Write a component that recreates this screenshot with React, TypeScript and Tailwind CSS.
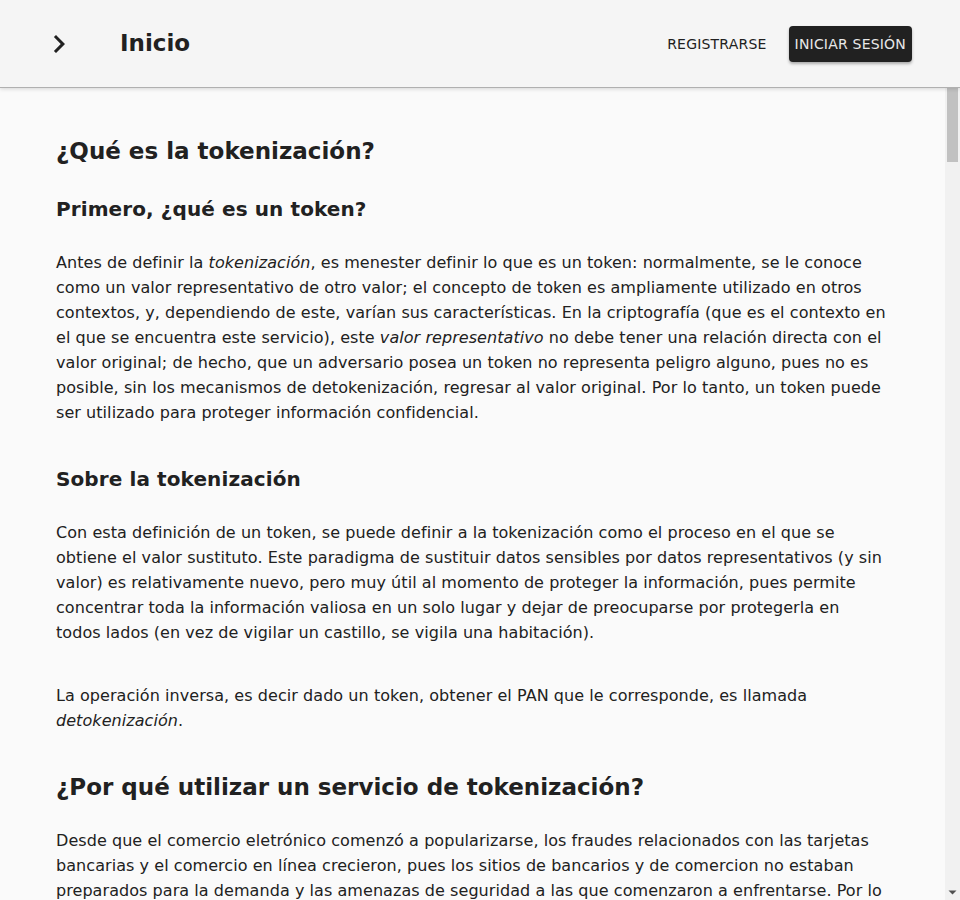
import React from "react";

const font = { fontFamily: '"DejaVu Sans", "Noto Sans", sans-serif' };

function Chevron() {
  return (
    <svg width="36" height="36" viewBox="0 0 24 24" className="block">
      <path d="M10 6 8.59 7.41 13.17 12l-4.58 4.59L10 18l6-6z" fill="#212121" />
    </svg>
  );
}

function Scrollbar() {
  return (
    <div className="flex h-full w-[15px] shrink-0 flex-col bg-[#f1f1f1]">
      <div className="h-[15px]" />
      <div className="mx-[2px] h-[147px] bg-[#c1c1c1]" />
      <div className="flex-1" />
      <div className="flex h-[15px] items-center justify-center">
        <svg width="9" height="9" viewBox="0 0 9 9" className="block">
          <path d="M0.5 2.5h8L4.5 6.5z" fill="#505050" />
        </svg>
      </div>
    </div>
  );
}

export default function App() {
  return (
    <div className="relative h-[900px] w-full overflow-hidden bg-[#fafafa] text-[#212121]" style={font}>
      <div className="flex h-full w-full">
        <main className="min-w-0 flex-1 overflow-hidden px-14 pt-[135px]">
          <h1 className="text-[23px] font-bold leading-[32px]">¿Qué es la tokenización?</h1>
          <h2 className="mt-[28px] text-[20px] font-bold leading-[28px] tracking-[0.1px]">Primero, ¿qué es un token?</h2>
          <p className="mt-[27px] text-[16px] leading-[25px] tracking-[0.06px]">
            Antes de definir la <em>tokenización</em>, es menester definir lo que es un token: normalmente, se le conoce
            como un valor representativo de otro valor; el concepto de token es ampliamente utilizado en otros
            contextos, y, dependiendo de este, varían sus características. En la criptografía (que es el contexto en
            el que se encuentra este servicio), este <em>valor representativo</em> no debe tener una relación directa con el
            valor original; de hecho, que un adversario posea un token no representa peligro alguno, pues no es
            posible, sin los mecanismos de detokenización, regresar al valor original. Por lo tanto, un token puede
            ser utilizado para proteger información confidencial.
          </p>
          <h2 className="mt-[40px] text-[20px] font-bold leading-[28px] tracking-[0.1px]">Sobre la tokenización</h2>
          <p className="mt-[27px] text-[16px] leading-[25px] tracking-[0.06px]">
            Con esta definición de un token, se puede definir a la tokenización como el proceso en el que se
            obtiene el valor sustituto. Este paradigma de sustituir datos sensibles por datos representativos (y sin
            valor) es relativamente nuevo, pero muy útil al momento de proteger la información, pues permite
            concentrar toda la información valiosa en un solo lugar y dejar de preocuparse por protegerla en
            todos lados (en vez de vigilar un castillo, se vigila una habitación).
          </p>
          <p className="mt-[38px] text-[16px] leading-[25px] tracking-[0.06px]">
            La operación inversa, es decir dado un token, obtener el PAN que le corresponde, es llamada{" "}
            <em>detokenización</em>.
          </p>
          <h1 className="mt-[38px] text-[23px] font-bold leading-[32px]">¿Por qué utilizar un servicio de tokenización?</h1>
          <p className="mt-[25px] text-[16px] leading-[25px] tracking-[0.06px]">
            Desde que el comercio eletrónico comenzó a popularizarse, los fraudes relacionados con las tarjetas
            bancarias y el comercio en línea crecieron, pues los sitios de bancarios y de comercion no estaban
            preparados para la demanda y las amenazas de seguridad a las que comenzaron a enfrentarse. Por lo
            tanto, surgió la necesidad de contar con mecanismos que permitieran proteger la información de los
            tarjetahabientes.
          </p>
        </main>
        <Scrollbar />
      </div>
      <header className="absolute left-0 right-0 top-0 flex h-[87px] items-center bg-[#f5f5f5] shadow-[0_1px_0_#b0b0b0,0_2px_4px_rgba(0,0,0,0.15)]">
        <div className="ml-[41px] w-[36px]">
          <Chevron />
        </div>
        <div className="ml-[43px] text-[23px] font-bold leading-none">Inicio</div>
        <div className="ml-auto mr-[48px] flex items-center gap-[10px]">
          <button className="h-[36px] rounded px-[12px] pt-[2px] text-[14px] uppercase tracking-[0.2px] text-[#212121]">
            Registrarse
          </button>
          <button className="h-[36px] rounded bg-[#212121] px-[6px] pt-[2px] text-[14px] uppercase tracking-[0.2px] text-[#e8e8e8] shadow-[0_2px_3px_rgba(0,0,0,0.3)]">
            Iniciar sesión
          </button>
        </div>
      </header>
    </div>
  );
}
